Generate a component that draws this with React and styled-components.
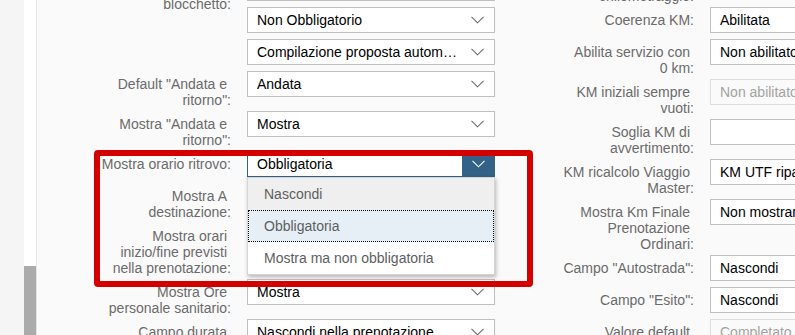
import React from "react";
import styled, { createGlobalStyle, css } from "styled-components";

const GlobalStyle = createGlobalStyle`
  html, body {
    margin: 0;
    padding: 0;
    height: 335px;
    overflow: hidden;
    background: #fafafa;
    font-family: "Liberation Sans", Arial, sans-serif;
  }
  * { box-sizing: border-box; }
`;

const Page = styled.div`
  display: flex;
  height: 335px;
  width: 795px;
`;

const Gutter = styled.div`
  flex: none;
  width: 24px;
  background: #f5f5f5;
`;

const ScrollTrack = styled.div`
  flex: none;
  width: 13px;
  background: #ffffff;
  border-right: 1px solid #e6e6e6;
  display: flex;
  flex-direction: column;
  justify-content: flex-end;
`;

const ScrollThumb = styled.div`
  height: 69px;
  background: #ababab;
`;

const Main = styled.div`
  flex: 1;
  position: relative;
  overflow: hidden;
  background: #fafafa;
`;

const Form = styled.div`
  display: flex;
  margin-top: -33px;
`;

const Column = styled.div`
  flex: none;
  display: flex;
  flex-direction: column;
  width: ${(p) => p.$width}px;
  padding-top: ${(p) => p.$offset || 0}px;
`;

const Row = styled.div`
  display: flex;
  align-items: flex-start;
`;

const Label = styled.div`
  flex: none;
  width: ${(p) => p.$width}px;
  padding: 5px 16px 3px 0;
  text-align: right;
  font-size: 14px;
  line-height: 16px;
  color: #6b6b6b;
`;

const LabelLine = styled.span`
  display: block;
  white-space: nowrap;
  &:not(:last-child) {
    padding-right: 4px;
  }
`;

const Fields = styled.div`
  display: flex;
  flex-direction: column;
`;

const FieldSlot = styled.div`
  position: relative;
  width: 248px;
  padding-bottom: 6px;
`;

const SelectBox = styled.div`
  display: flex;
  height: 26px;
  border: 1px solid #bfbfbf;
  background: #ffffff;
  font-size: 14px;
  color: #000000;
  ${(p) =>
    p.$disabled &&
    css`
      border-color: #dcdcdc;
      background: #fafafa;
      color: #a2a2a2;
    `}
  ${(p) =>
    p.$active &&
    css`
      border-color: #346187;
    `}
`;

const Value = styled.span`
  flex: 1;
  min-width: 0;
  padding-left: 9px;
  line-height: 24px;
  white-space: nowrap;
  overflow: hidden;
  text-overflow: ellipsis;
`;

const Arrow = styled.span`
  flex: none;
  width: 33px;
  display: flex;
  align-items: center;
  justify-content: center;
  color: ${(p) => (p.$active ? "#ffffff" : "#6a6d70")};
  background: ${(p) => (p.$active ? "#346187" : "transparent")};
  margin: ${(p) => (p.$active ? "-1px -1px -1px 0" : "0")};
  ${(p) => p.$disabled && css`color: #c4c4c4;`}
`;

const List = styled.ul`
  position: absolute;
  top: 26px;
  left: 0;
  width: 248px;
  margin: 0;
  padding: 0;
  list-style: none;
  background: #ffffff;
  border: 1px solid #d4d4d4;
  box-shadow: 1px 2px 4px rgba(0, 0, 0, 0.28);
  z-index: 2;
`;

const Item = styled.li`
  height: 32px;
  display: flex;
  align-items: center;
  padding-left: 16px;
  font-size: 14px;
  color: #5e5e5e;
  ${(p) =>
    p.$hover &&
    css`
      background: #efefef;
    `}
  ${(p) =>
    p.$selected &&
    css`
      background: #e6eef6;
      outline: 1px dotted #000000;
      outline-offset: -1px;
    `}
`;

const Highlight = styled.div`
  position: absolute;
  left: 57px;
  top: 150px;
  width: 439px;
  height: 137px;
  border: 6px solid #d40000;
  border-radius: 4px;
  pointer-events: none;
  z-index: 3;
`;

const Chevron = () => (
  <svg width="13" height="8" viewBox="0 0 13 8" fill="none">
    <polyline
      points="0.5,0.8 6.5,6.8 12.5,0.8"
      stroke="currentColor"
      strokeWidth="1.1"
    />
  </svg>
);

const Select = ({ value, disabled, active, options, hover, selected }) => (
  <FieldSlot>
    <SelectBox $disabled={disabled} $active={active}>
      <Value>{value}</Value>
      <Arrow $active={active} $disabled={disabled}>
        <Chevron />
      </Arrow>
    </SelectBox>
    {options && (
      <List>
        {options.map((o) => (
          <Item key={o} $hover={o === hover} $selected={o === selected}>
            {o}
          </Item>
        ))}
      </List>
    )}
  </FieldSlot>
);

const FormRow = ({ lines, labelWidth, fields }) => (
  <Row>
    <Label $width={labelWidth}>
      {lines.map((l, i) => (
        <LabelLine key={i}>{l}</LabelLine>
      ))}
    </Label>
    <Fields>
      {fields.map((f, i) => (
        <Select key={i} {...f} />
      ))}
    </Fields>
  </Row>
);

const leftRows = [
  {
    lines: ["Numerazione", "blocchetto:"],
    fields: [
      { value: "Obbligatorio" },
      { value: "Non Obbligatorio" },
      { value: "Compilazione proposta automatica" },
    ],
  },
  { lines: ['Default "Andata e', 'ritorno":'], fields: [{ value: "Andata" }] },
  { lines: ['Mostra "Andata e', 'ritorno":'], fields: [{ value: "Mostra" }] },
  {
    lines: ["Mostra orario ritrovo:"],
    fields: [
      {
        value: "Obbligatoria",
        active: true,
        options: ["Nascondi", "Obbligatoria", "Mostra ma non obbligatoria"],
        hover: "Nascondi",
        selected: "Obbligatoria",
      },
    ],
  },
  { lines: ["Mostra A", "destinazione:"], fields: [{ value: "Mostra" }] },
  {
    lines: ["Mostra orari", "inizio/fine previsti", "nella prenotazione:"],
    fields: [{ value: "Mostra" }],
  },
  { lines: ["Mostra Ore", "personale sanitario:"], fields: [{ value: "Mostra" }] },
  {
    lines: ["Campo durata", "servizio:"],
    fields: [{ value: "Nascondi nella prenotazione mostra nel servizio" }],
  },
];

const rightRows = [
  { lines: ["Abilita", "chilometraggio:"], fields: [{ value: "Abilitato" }] },
  { lines: ["Coerenza KM:"], fields: [{ value: "Abilitata" }] },
  { lines: ["Abilita servizio con", "0 km:"], fields: [{ value: "Non abilitato" }] },
  {
    lines: ["KM iniziali sempre", "vuoti:"],
    fields: [{ value: "Non abilitato", disabled: true }],
  },
  { lines: ["Soglia KM di", "avvertimento:"], fields: [{ value: "" }] },
  {
    lines: ["KM ricalcolo Viaggio", "Master:"],
    fields: [{ value: "KM UTF riparametrati" }],
  },
  {
    lines: ["Mostra Km Finale", "Prenotazione", "Ordinari:"],
    fields: [{ value: "Non mostrare" }],
  },
  { lines: ['Campo "Autostrada":'], fields: [{ value: "Nascondi" }] },
  { lines: ['Campo "Esito":'], fields: [{ value: "Nascondi" }] },
  {
    lines: ["Valore default", "esito:"],
    fields: [{ value: "Completato", disabled: true }],
  },
];

export default function App() {
  return (
    <>
      <GlobalStyle />
      <Page>
        <Gutter />
        <ScrollTrack>
          <ScrollThumb />
        </ScrollTrack>
        <Main>
          <Form>
            <Column $width={474} $offset={8}>
              {leftRows.map((r, i) => (
                <FormRow key={i} labelWidth={210} {...r} />
              ))}
            </Column>
            <Column $width={460}>
              {rightRows.map((r, i) => (
                <FormRow key={i} labelWidth={199} {...r} />
              ))}
            </Column>
          </Form>
          <Highlight />
        </Main>
      </Page>
    </>
  );
}
